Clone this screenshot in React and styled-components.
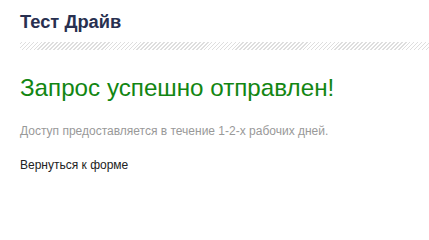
import React from "react";
import styled, { createGlobalStyle } from "styled-components";

const Global = createGlobalStyle`
  html, body { margin: 0; padding: 0; background: #fff; }
  body { font-family: "Liberation Sans", Arial, sans-serif; }
`;

const Page = styled.div`
  padding: 11px 0 0 20px;
`;

const Title = styled.h1`
  margin: 0;
  font-size: 18.3px;
  font-weight: bold;
  line-height: 22px;
  color: #283050;
`;

const Stripes = styled.div`
  margin-top: 9px;
  height: 8px;
  background: repeating-linear-gradient(
    -45deg,
    #ffffff 0px,
    #ffffff 1.6px,
    #dedede 1.6px,
    #dedede 2.8px
  );
`;

const Success = styled.h2`
  margin: 24px 0 0;
  font-size: 24.2px;
  font-weight: normal;
  line-height: 28px;
  color: #128612;
`;

const Note = styled.p`
  margin: 22px 0 0;
  font-size: 12px;
  line-height: 14px;
  color: #999;
`;

const Back = styled.a`
  display: block;
  margin-top: 20px;
  font-size: 12px;
  line-height: 14px;
  color: #222;
  text-decoration: none;
`;

export default function App() {
  return (
    <>
      <Global />
      <Page>
        <Title>Тест Драйв</Title>
        <Stripes />
        <Success>Запрос успешно отправлен!</Success>
        <Note>Доступ предоставляется в течение 1-2-х рабочих дней.</Note>
        <Back href="#">Вернуться к форме</Back>
      </Page>
    </>
  );
}
